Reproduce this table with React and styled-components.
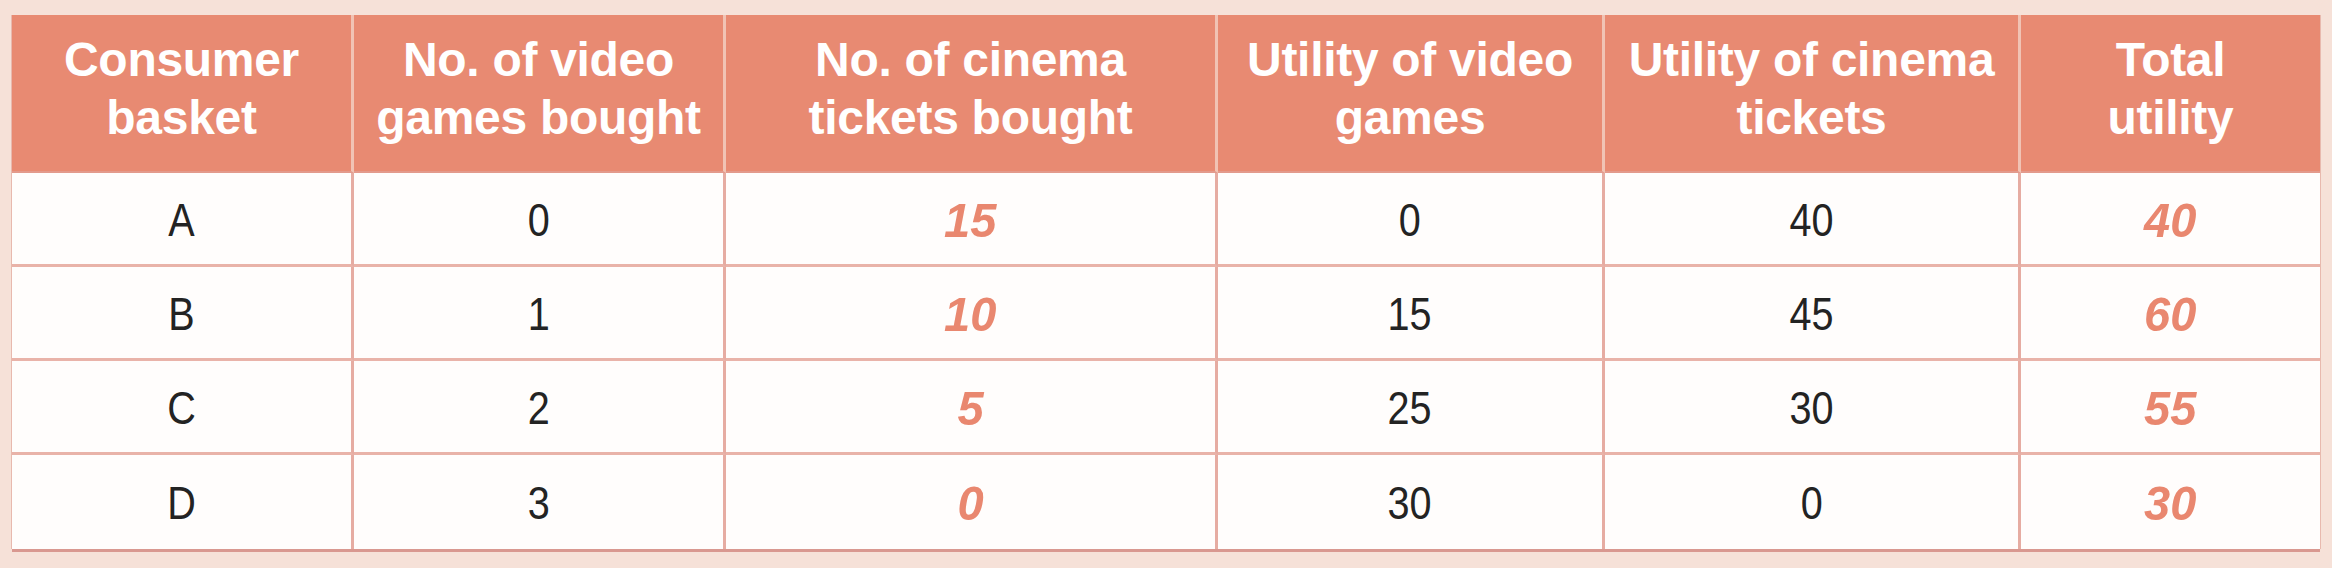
import React from 'react'
import styled, { createGlobalStyle } from 'styled-components'

const GlobalStyle = createGlobalStyle`
  html, body {
    margin: 0;
    padding: 0;
    background: #f6e1d8;
  }
`

const Page = styled.div`
  width: 2332px;
  height: 568px;
  padding: 15px 0 0 12px;
  box-sizing: border-box;
  background: #f6e1d8;
`

const Grid = styled.div`
  display: grid;
  grid-template-columns: 342px 372px 492px 387px 416px 299px;
  width: 2308px;
  background: #fffdfc;
  box-shadow: 0 3px 0 #d99890, 1px 0 0 #e8b9ae, -1px 0 0 #e8b9ae;
  font-family: "Liberation Sans", Arial, sans-serif;
`

const HeadCell = styled.div`
  height: 158px;
  box-sizing: border-box;
  display: flex;
  align-items: center;
  justify-content: center;
  padding-bottom: 8px;
  text-align: center;
  background: #e88a72;
  color: #fff;
  font-weight: 700;
  font-size: 48px;
  line-height: 58px;
  letter-spacing: -0.3px;
  border-right: ${p => (p.$last ? 'none' : '3px solid #f1c3b4')};
  border-bottom: 2px solid #e39a8c;
`

const Cell = styled.div`
  height: 94px;
  box-sizing: border-box;
  display: flex;
  align-items: center;
  justify-content: center;
  border-right: ${p => (p.$last ? 'none' : '3px solid #e6aca2')};
  border-bottom: ${p => (p.$bottom ? 'none' : '3px solid #e9b3a9')};
  padding-top: 2px;
`

const Value = styled.span`
  display: inline-block;
  color: ${p => (p.$accent ? '#e9876f' : '#232323')};
  font-size: ${p => (p.$accent ? '49px' : '46px')};
  font-weight: ${p => (p.$accent ? 700 : 400)};
  font-style: ${p => (p.$accent ? 'italic' : 'normal')};
  transform: scaleX(${p => (p.$accent ? 0.96 : 0.86)});
`

const headers = [
  ['Consumer', 'basket'],
  ['No. of video', 'games bought'],
  ['No. of cinema', 'tickets bought'],
  ['Utility of video', 'games'],
  ['Utility of cinema', 'tickets'],
  ['Total', 'utility'],
]

const rows = [
  ['A', '0', '15', '0', '40', '40'],
  ['B', '1', '10', '15', '45', '60'],
  ['C', '2', '5', '25', '30', '55'],
  ['D', '3', '0', '30', '0', '30'],
]

const accentCols = [2, 5]

export default function App() {
  return (
    <Page>
      <GlobalStyle />
      <Grid>
        {headers.map((h, i) => (
          <HeadCell key={i} $last={i === headers.length - 1}>
            <span>
              {h[0]}
              <br />
              {h[1]}
            </span>
          </HeadCell>
        ))}
        {rows.map((row, r) =>
          row.map((v, c) => (
            <Cell
              key={r + '-' + c}
              $last={c === row.length - 1}
              $bottom={r === rows.length - 1}
            >
              <Value $accent={accentCols.includes(c)}>{v}</Value>
            </Cell>
          ))
        )}
      </Grid>
    </Page>
  )
}
